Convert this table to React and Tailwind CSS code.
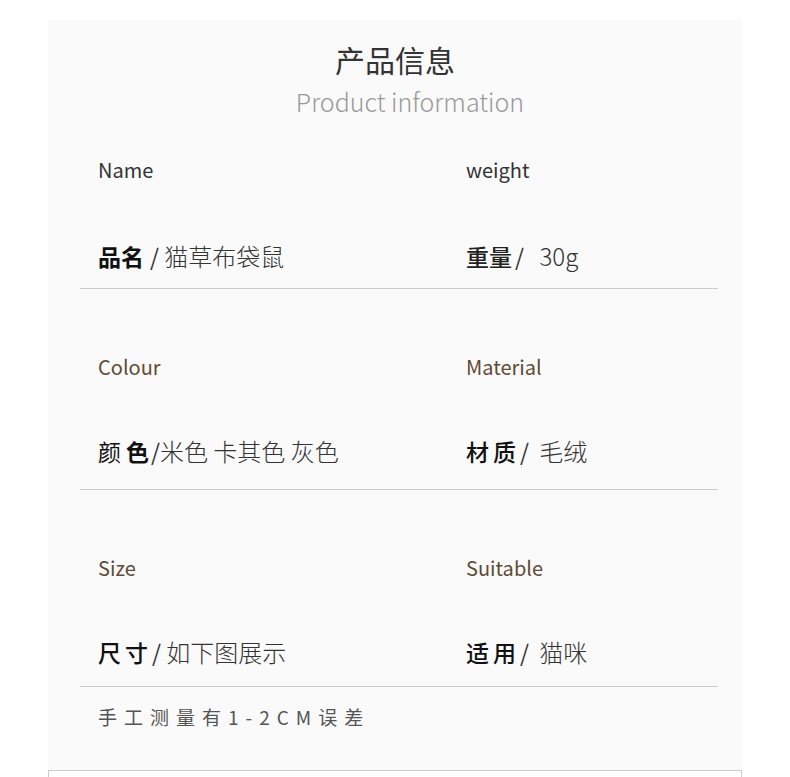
const font = { fontFamily: '"Noto Sans CJK SC", "Noto Sans", sans-serif' }

const rows = [
  {
    top: 'pt-[39px]',
    gapY: 'mt-[56px]',
    bottom: 'pb-[17px]',
    left: { label: 'Name', labelTone: 'text-[#333333]', key: <span className="font-bold text-[#111111]">品名</span>, value: '猫草布袋鼠', pre: 'ml-[6px]', gap: ' ' },
    right: { label: 'weight', labelTone: 'text-[#333333]', key: <span className="font-medium text-[#222222]">重量</span>, value: '30g', pre: 'ml-[3px]', gap: '   ' },
  },
  {
    top: 'pt-[63px]',
    gapY: 'mt-[54px]',
    bottom: 'pb-[23px]',
    left: {
      label: 'Colour',
      labelTone: 'text-[#5f4b36]',
      key: (
        <span className="text-[#111111]">
          <span className="font-normal">颜</span>
          <span className="ml-[5px] font-bold">色</span>
        </span>
      ),
      value: '米色 卡其色 灰色',
      pre: 'ml-[2px]',
      gap: '',
    },
    right: {
      label: 'Material',
      labelTone: 'text-[#5f4b36]',
      key: <span className="font-medium tracking-[4px] text-[#111111]">材质</span>,
      value: '毛绒',
      pre: 'ml-0',
      gap: '  ',
    },
  },
  {
    top: 'pt-[63px]',
    gapY: 'mt-[54px]',
    bottom: 'pb-[19px]',
    left: { label: 'Size', labelTone: 'text-[#5f4b36]', key: <span className="font-medium tracking-[4px] text-[#111111]">尺寸</span>, value: '如下图展示', pre: 'ml-0', gap: ' ' },
    right: { label: 'Suitable', labelTone: 'text-[#5f4b36]', key: <span className="font-medium tracking-[4px] text-[#111111]">适用</span>, value: '猫咪', pre: 'ml-0', gap: '  ' },
  },
]

function Cell({ item, gapY }) {
  return (
    <div className="flex flex-col">
      <div className={`h-[30px] text-[20px] leading-[30px] ${item.labelTone}`}>{item.label}</div>
      <div className={`${gapY} h-[30px] whitespace-pre text-[23px] font-light leading-[30px] text-[#333333]`}>
        {item.key}
        <span className={`font-normal text-[#333333] ${item.pre}`}>/{item.gap}</span>
        <span className="text-[24px]">{item.value}</span>
      </div>
    </div>
  )
}

export default function App() {
  return (
    <div className="h-[777px] w-[790px] overflow-hidden bg-white" style={font}>
      <div className="ml-[48px] mt-[20px] flex h-[750px] w-[694px] flex-col bg-[#fafafa]">
        {/* Heading */}
        <div className="flex flex-col items-center pt-[21px]">
          <h1 className="h-[36px] text-[30px] leading-[36px] text-[#333333]">产品信息</h1>
          <p className="ml-[30px] mt-[9px] h-[30px] text-[25px] font-light leading-[30px] text-[#999999]">Product information</p>
        </div>

        {/* Spec rows */}
        {rows.map((row, i) => (
          <div key={i} className={`ml-[32px] mr-[24px] border-b border-[#cccccc] px-[18px] ${row.top} ${row.bottom}`}>
            <div className="grid grid-cols-[368px_1fr]">
              <Cell item={row.left} gapY={row.gapY} />
              <Cell item={row.right} gapY={row.gapY} />
            </div>
          </div>
        ))}

        {/* Footnote */}
        <p className="ml-[50px] mt-[15px] h-[30px] text-[19px] leading-[30px] tracking-[7px] text-[#555555]">
          手工测量有1-2CM误差
        </p>
      </div>
      <div className="ml-[48px] h-[20px] w-[694px] border-x border-t border-[#cccccc] bg-white" />
    </div>
  )
}
